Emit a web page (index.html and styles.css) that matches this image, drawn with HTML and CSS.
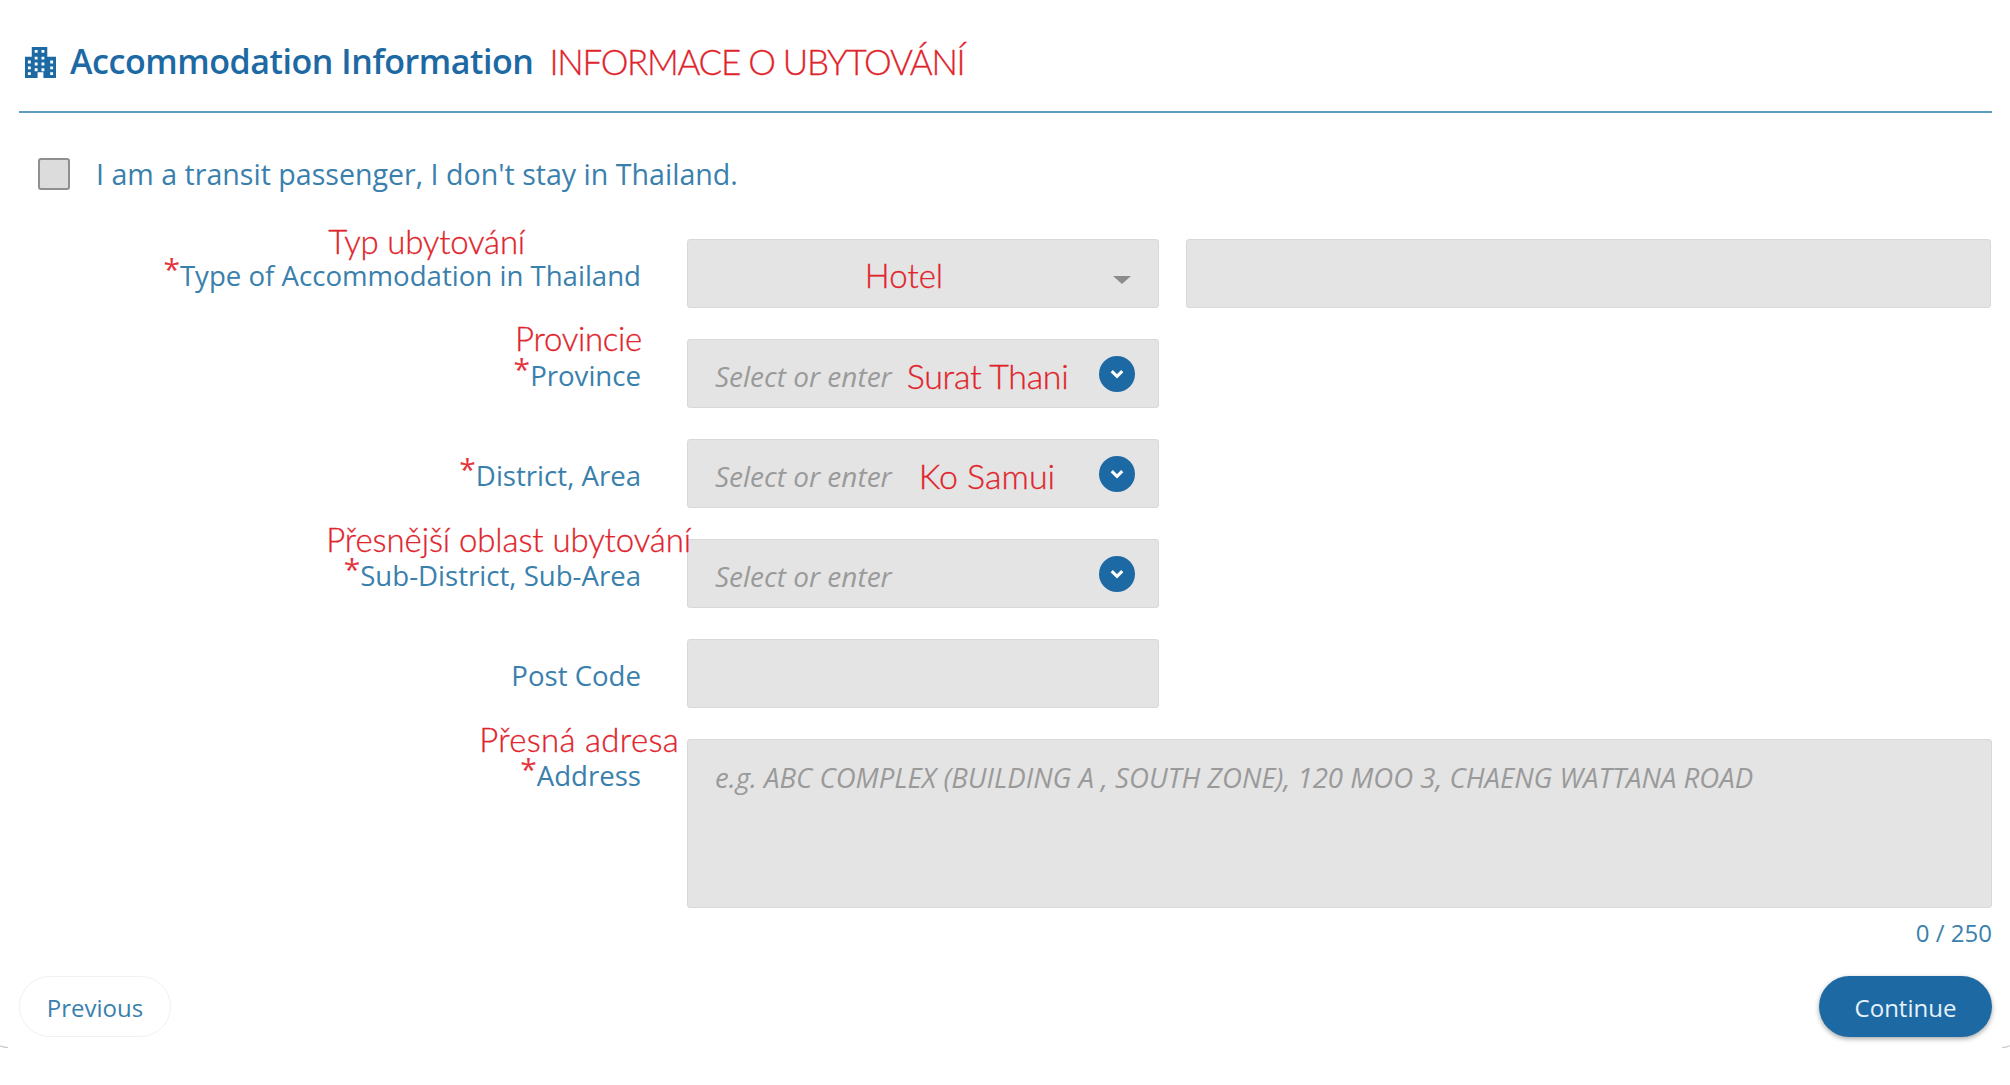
FILE: index.html
```html
<!DOCTYPE html>
<html lang="en">
<head>
<meta charset="utf-8">
<title>Accommodation Information</title>
<link rel="stylesheet" href="styles.css">
</head>
<body>
<main class="card">
  <span class="corner corner-left"></span>
  <span class="corner corner-right"></span>
  <header class="header">
    <svg class="building" viewBox="0 0 32 32" aria-hidden="true">
      <path fill-rule="evenodd" d="M7 0h16v10h9v22H19v-6h-6v6H0V10h7zM10 3v3h3V3zM17 3v3h3V3zM10 10v3h3v-3zM17 10v3h3v-3zM3 14v3h3v-3zM26 14v3h3v-3zM10 16v3h3v-3zM17 16v3h3v-3zM3 20v3h3v-3zM26 20v3h3v-3zM10 22v3h3v-3zM17 22v3h3v-3zM3 26v3h3v-3zM26 26v3h3v-3z"/>
    </svg>
    <h1 class="title">Accommodation Information</h1>
    <span class="note note-title">INFORMACE O UBYTOVÁNÍ</span>
  </header>

  <label class="transit">
    <span class="checkbox"></span>
    <span>I am a transit passenger, I don't stay in Thailand.</span>
  </label>

  <section class="form">
    <div class="row">
      <div class="label">
        <span class="note note-label note-type">Typ ubytování</span>
        <span class="star">*</span>Type of Accommodation in Thailand
      </div>
      <div class="control select-hotel">
        <span class="note note-hotel">Hotel</span>
        <span class="caret"></span>
      </div>
      <div class="control control-wide"></div>
    </div>

    <div class="row">
      <div class="label">
        <span class="note note-label note-province">Provincie</span>
        <span class="star">*</span>Province
      </div>
      <div class="control combo">
        <span class="placeholder">Select or enter</span>
        <span class="note note-value note-surat">Surat Thani</span>
        <span class="chevron"><svg viewBox="0 0 12 8" aria-hidden="true"><path d="M1.5 1.5 6 6l4.5-4.5"/></svg></span>
      </div>
    </div>

    <div class="row">
      <div class="label"><span class="star">*</span>District, Area</div>
      <div class="control combo">
        <span class="placeholder">Select or enter</span>
        <span class="note note-value note-samui">Ko Samui</span>
        <span class="chevron"><svg viewBox="0 0 12 8" aria-hidden="true"><path d="M1.5 1.5 6 6l4.5-4.5"/></svg></span>
      </div>
    </div>

    <div class="row">
      <div class="label">
        <span class="note note-label note-sub">Přesnější oblast ubytování</span>
        <span class="star">*</span>Sub-District, Sub-Area
      </div>
      <div class="control combo">
        <span class="placeholder">Select or enter</span>
        <span class="chevron"><svg viewBox="0 0 12 8" aria-hidden="true"><path d="M1.5 1.5 6 6l4.5-4.5"/></svg></span>
      </div>
    </div>

    <div class="row">
      <div class="label">Post Code</div>
      <div class="control"></div>
    </div>

    <div class="row row-address">
      <div class="label">
        <span class="note note-label note-address">Přesná adresa</span>
        <span class="star">*</span>Address
      </div>
      <div class="control control-area">
        <span class="placeholder">e.g. ABC COMPLEX (BUILDING A , SOUTH ZONE), 120 MOO 3, CHAENG WATTANA ROAD</span>
      </div>
    </div>
    <div class="counter">0 / 250</div>
  </section>

  <footer class="actions">
    <button class="btn btn-prev" type="button">Previous</button>
    <button class="btn btn-next" type="button">Continue</button>
  </footer>
</main>
</body>
</html>
```

FILE: styles.css
```css
* { box-sizing: border-box; }

html, body { margin: 0; padding: 0; background: #fff; }

body {
  font-family: "Open Sans", "Liberation Sans", sans-serif;
  color: #3a80ad;
}

.card {
  position: relative;
  height: 1048px;
  padding: 0 18px 0 19px;
  overflow: hidden;
}

.corner {
  position: absolute;
  bottom: 0;
  width: 20px;
  height: 20px;
  border-bottom: 1px solid #c4c4c4;
}
.corner-left { left: -12px; border-left: 1px solid #c4c4c4; border-bottom-left-radius: 20px; }
.corner-right { right: -12px; border-right: 1px solid #c4c4c4; border-bottom-right-radius: 20px; }

.header {
  display: flex;
  align-items: center;
  height: 113px;
  padding: 10px 0 0 6px;
  border-bottom: 2px solid #5d9dc2;
}

.building { width: 31px; height: 31px; fill: #1d69a4; margin-top: 3px; flex: none; }

.title {
  margin: 0 0 0 14px;
  font-size: 34px;
  font-weight: 600;
  letter-spacing: -0.45px;
  color: #1d69a4;
}

.note {
  font-family: Lato, "Liberation Sans", sans-serif;
  font-weight: 300;
  color: #e0242c;
  -webkit-text-stroke: 0.3px #e0242c;
}

.note-title { margin-left: 16px; font-size: 35px; letter-spacing: -1.3px; }

.transit {
  display: flex;
  align-items: center;
  height: 62px;
  margin-top: 30px;
  padding: 0 0 2px 19px;
  font-size: 28.6px;
}

.checkbox {
  width: 32px;
  height: 32px;
  margin: 2px 26px 0 0;
  background: #dcdcdc;
  border: 2px solid #8f8f8f;
  border-radius: 3px;
}

.form { margin-top: 34px; }

.row {
  display: flex;
  height: 69px;
  margin-bottom: 31px;
}

.row-address { height: 169px; margin-bottom: 0; }

.label {
  position: relative;
  z-index: 1;
  width: 622px;
  flex: none;
  margin-right: 46px;
  padding-top: 18px;
  text-align: right;
  font-size: 27.6px;
  line-height: 36px;
  color: #3a80ad;
}

.star {
  color: #e5333b;
  font-size: 30px;
  line-height: 20px;
  vertical-align: 6px;
}

.note-label {
  position: absolute;
  top: -13px;
  font-size: 33px;
  line-height: 30px;
  white-space: nowrap;
}
.note-type { right: 116px; letter-spacing: -0.2px; }
.note-province { right: -1px; top: -16px; letter-spacing: -0.3px; }
.note-sub { right: -50px; top: -15px; letter-spacing: -0.1px; }
.note-address { right: -38px; top: -15px; letter-spacing: 0.3px; }

.control {
  position: relative;
  display: flex;
  align-items: center;
  width: 472px;
  flex: none;
  background: #e4e4e4;
  border: 1px solid #d8d8d8;
  border-radius: 3px;
  padding-left: 27px;
}

.control-wide { width: 805px; margin-left: 27px; }

.select-hotel { justify-content: center; padding: 2px 38px 0 0; }

.note-hotel { font-size: 33px; }

.caret {
  position: absolute;
  right: 27px;
  top: 36px;
  width: 0;
  height: 0;
  border-left: 9px solid transparent;
  border-right: 9px solid transparent;
  border-top: 8px solid #8c8c8c;
}

.placeholder {
  font-style: italic;
  font-size: 27.6px;
  color: #9a9a9a;
  white-space: nowrap;
}

.combo .placeholder { margin-top: 5px; font-size: 28px; }

.note-value { margin-top: 4px; font-size: 34px; white-space: nowrap; }
.note-surat { margin-left: 15px; letter-spacing: -0.3px; }
.note-samui { margin-left: 27px; }

.chevron {
  position: absolute;
  right: 23px;
  top: 16px;
  width: 36px;
  height: 36px;
  display: flex;
  align-items: center;
  justify-content: center;
  background: #1d69a4;
  border-radius: 50%;
}
.chevron svg { width: 14px; height: 10px; fill: none; stroke: #fff; stroke-width: 2.6; }

.control-area {
  width: 1305px;
  align-items: flex-start;
  padding-top: 18px;
}

.counter {
  margin-top: 9px;
  text-align: right;
  font-size: 24px;
  line-height: 32px;
  color: #3a80ad;
}

.actions {
  display: flex;
  justify-content: space-between;
  margin-top: 27px;
}

.btn {
  height: 61px;
  padding: 2px 0 0;
  border-radius: 31px;
  font-family: "Open Sans", "Liberation Sans", sans-serif;
  font-size: 24px;
}

.btn-prev {
  width: 152px;
  background: #fff;
  border: 1px solid #f1f1f1;
  color: #3a80ad;
}

.btn-next {
  width: 173px;
  background: #1d69a4;
  border: 0;
  color: #e6f2fa;
  box-shadow: 0 2px 5px rgba(0, 0, 0, 0.35);
}
```
